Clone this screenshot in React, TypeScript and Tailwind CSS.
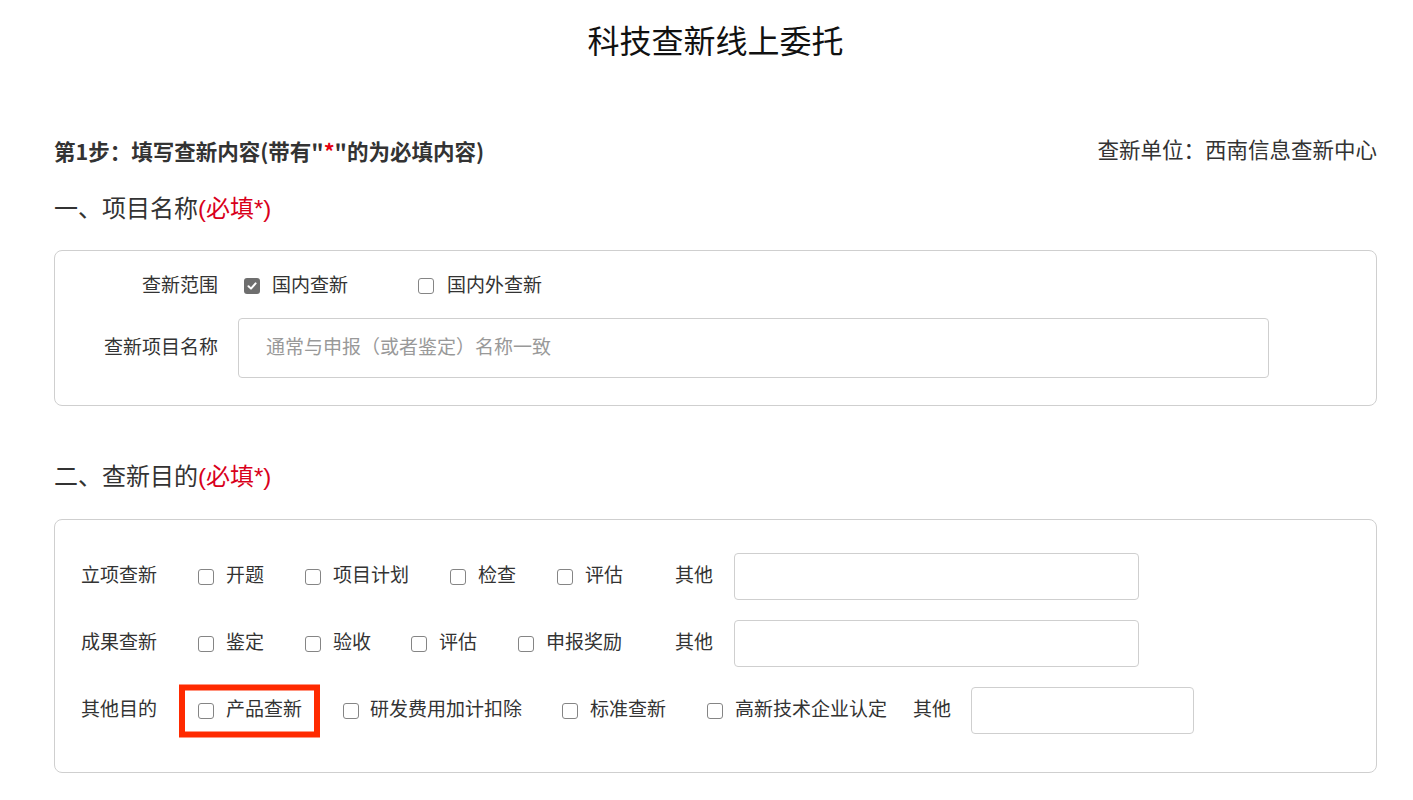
import React from "react";

const font = {
  fontFamily: '"Liberation Sans", "Noto Sans CJK SC", sans-serif',
};

// small square checkbox as drawn by the browser
function Box({ checked = false }: { checked?: boolean }) {
  if (checked) {
    return (
      <span className="flex h-[16px] w-[16px] shrink-0 items-center justify-center rounded-[3px] bg-[#6e6e6e]">
        <svg width="12" height="12" viewBox="0 0 12 12" fill="none">
          <path d="M2.5 6.2 L5 8.6 L9.6 3.4" stroke="#fff" strokeWidth="2" strokeLinecap="round" strokeLinejoin="round" />
        </svg>
      </span>
    );
  }
  return <span className="block h-[16px] w-[16px] shrink-0 rounded-[3px] border border-[#858585] bg-white" />;
}

function Option({ label, className = "", gap = "ml-[12px]", checked = false }: { label: string; className?: string; gap?: string; checked?: boolean }) {
  return (
    <label className={`flex items-center ${className}`}>
      <Box checked={checked} />
      <span className={`${gap} whitespace-nowrap`}>{label}</span>
    </label>
  );
}

function Heading({ text }: { text: string }) {
  return (
    <div className="flex h-[34px] items-center text-[24px] text-[#333]">
      {text}
      <span className="text-[#d9001b]">(必填*)</span>
    </div>
  );
}

export default function App() {
  return (
    <div className="min-h-screen bg-white pl-[54px] pr-[36px] text-[#333]" style={font}>
      <div className="flex h-[84px] items-center justify-center text-[32px] text-[#111]">科技查新线上委托</div>

      <div className="mt-[52px] flex h-[30px] items-center justify-between">
        <div
          className="text-[21.5px] font-bold text-[#333]"
          style={{ fontFamily: '"Noto Sans CJK SC", sans-serif' }}
        >
          第1步：填写查新内容(带有"<span className="text-[#e60012]">*</span>"的为必填内容)
        </div>
        <div className="text-[21.5px] text-[#333]">查新单位：西南信息查新中心</div>
      </div>

      <div className="mt-[26px]">
        <Heading text="一、项目名称" />
      </div>

      {/* card 1 */}
      <div className="mt-[24px] rounded-[8px] border border-[#cfcfcf] pt-[20px] pb-[27px] text-[19px]">
        <div className="flex h-[30px] items-center">
          <div className="w-[163px] text-right">查新范围</div>
          <Option label="国内查新" checked className="ml-[26px]" />
          <Option label="国内外查新" className="ml-[70px]" gap="ml-[13px]" />
        </div>
        <div className="mt-[17px] flex items-center">
          <div className="w-[163px] text-right">查新项目名称</div>
          <input
            className="ml-[20px] h-[60px] w-[1031px] rounded-[4px] border border-[#cfcfcf] px-[27px] text-[19px] text-[#333] outline-none placeholder:text-[#999]"
            placeholder="通常与申报（或者鉴定）名称一致"
            style={font}
          />
        </div>
      </div>

      <div className="mt-[54px]">
        <Heading text="二、查新目的" />
      </div>

      {/* card 2 */}
      <div className="mt-[25px] flex flex-col gap-[20px] rounded-[8px] border border-[#cfcfcf] pt-[33px] pb-[38px] pl-[26px] text-[19px]">
        <div className="flex h-[47px] items-center">
          <div className="w-[77px] whitespace-nowrap">立项查新</div>
          <Option label="开题" className="ml-[40px]" />
          <Option label="项目计划" className="ml-[41px]" />
          <Option label="检查" className="ml-[41px]" />
          <Option label="评估" className="ml-[41px]" />
          <div className="ml-[52px] whitespace-nowrap">其他</div>
          <input className="ml-[21px] h-[47px] w-[405px] rounded-[4px] border border-[#cfcfcf] outline-none" />
        </div>
        <div className="flex h-[47px] items-center">
          <div className="w-[77px] whitespace-nowrap">成果查新</div>
          <Option label="鉴定" className="ml-[40px]" />
          <Option label="验收" className="ml-[41px]" />
          <Option label="评估" className="ml-[40px]" />
          <Option label="申报奖励" className="ml-[41px]" />
          <div className="ml-[53px] whitespace-nowrap">其他</div>
          <input className="ml-[21px] h-[47px] w-[405px] rounded-[4px] border border-[#cfcfcf] outline-none" />
        </div>
        <div className="flex h-[47px] items-center">
          <div className="w-[77px] whitespace-nowrap">其他目的</div>
          <div className="relative ml-[40px] flex items-center">
            <Option label="产品查新" />
            {/* red annotation frame */}
            <div className="pointer-events-none absolute top-1/2 left-[-19px] h-[53px] w-[141px] -translate-y-1/2 border-[6px] border-[#ff2a00]" />
          </div>
          <Option label="研发费用加计扣除" className="ml-[41px]" gap="ml-[11px]" />
          <Option label="标准查新" className="ml-[40px]" />
          <Option label="高新技术企业认定" className="ml-[41px]" />
          <div className="ml-[26px] whitespace-nowrap">其他</div>
          <input className="ml-[20px] h-[47px] w-[223px] rounded-[4px] border border-[#cfcfcf] outline-none" />
        </div>
      </div>
    </div>
  );
}
